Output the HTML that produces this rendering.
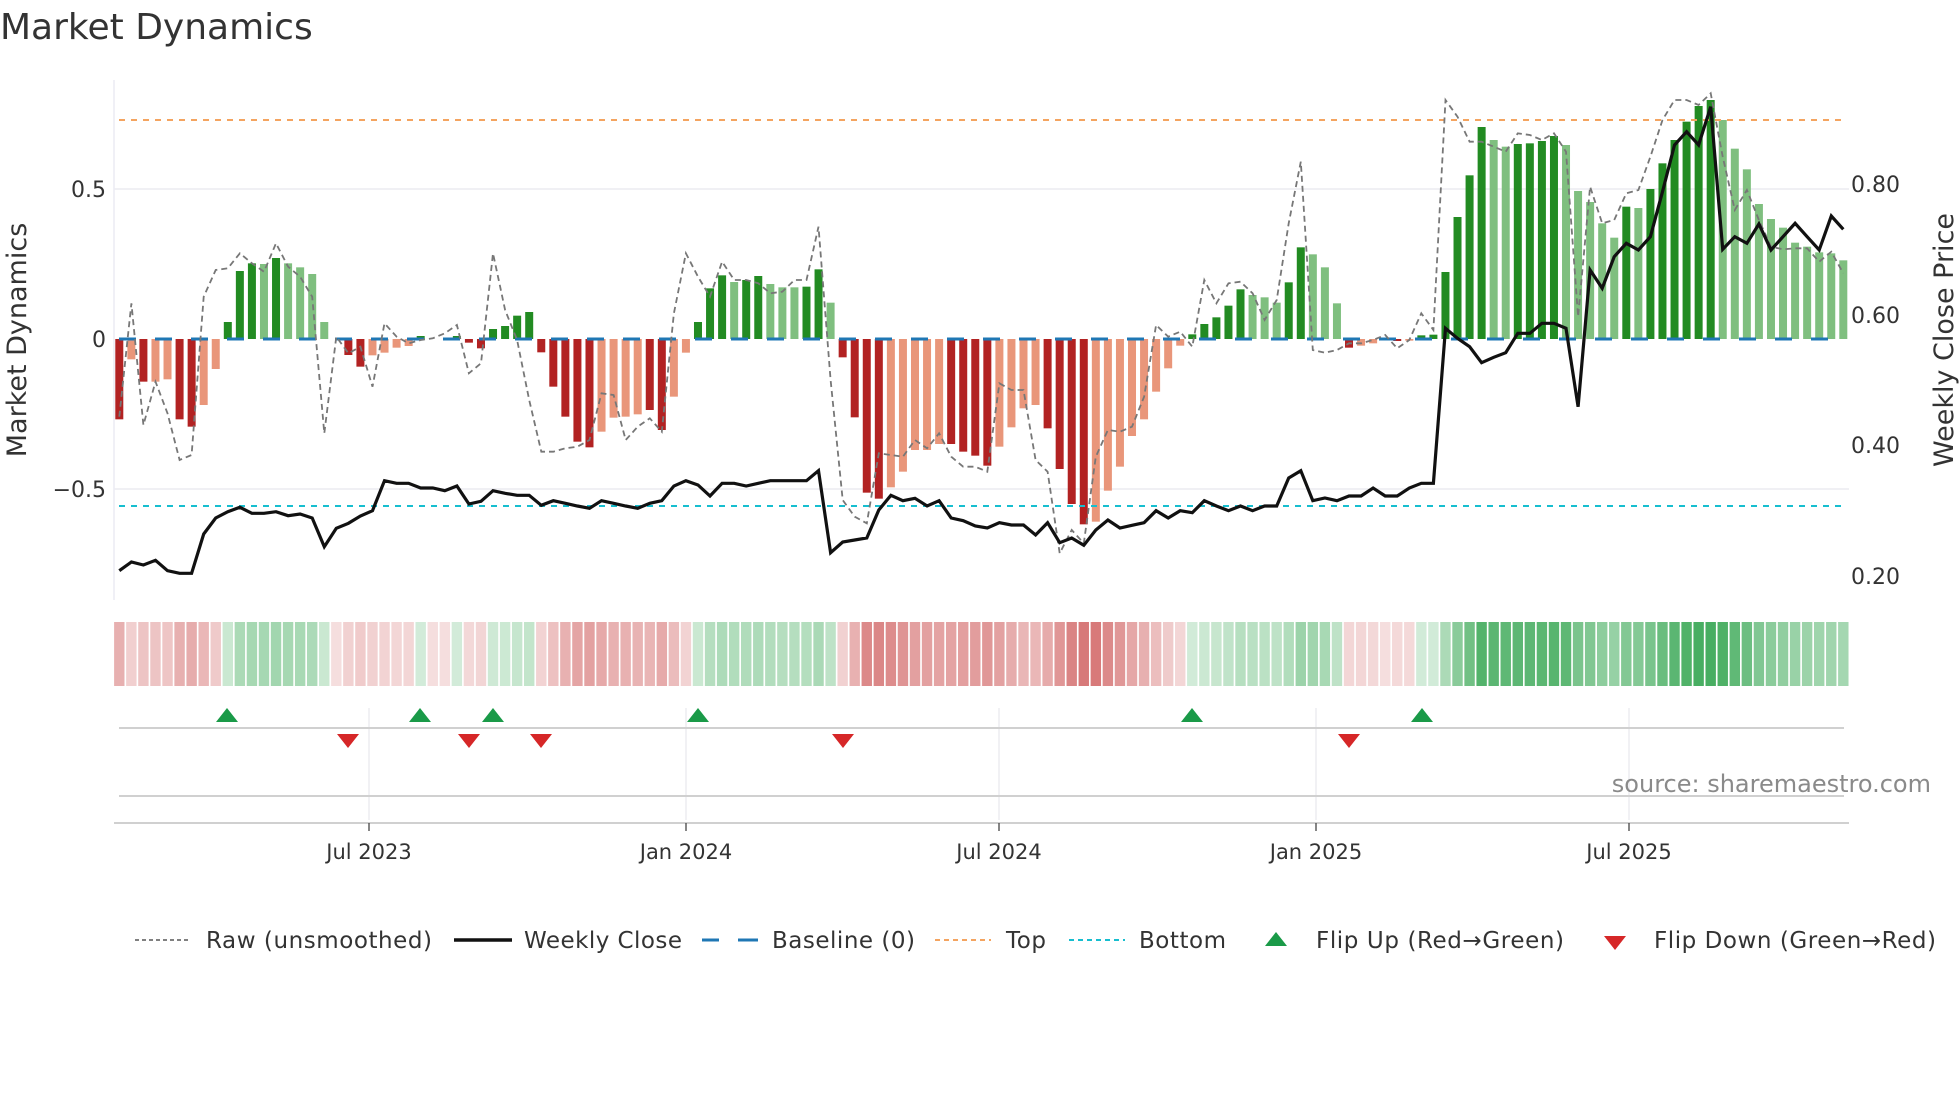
<!DOCTYPE html>
<html><head><meta charset="utf-8"><style>
html,body{margin:0;padding:0;background:#fff;}
svg{display:block;font-family:"DejaVu Sans","Liberation Sans",sans-serif;}
</style></head><body>
<svg id="s" width="1960" height="1102" viewBox="0 0 1960 1102" xmlns="http://www.w3.org/2000/svg">
<rect width="1960" height="1102" fill="#fff"/>
<text x="0" y="39" font-size="36" fill="#333">Market Dynamics</text>
<g stroke="#ececf0" stroke-width="1.5">
<line x1="114" y1="189" x2="1849" y2="189"/>
<line x1="114" y1="489" x2="1849" y2="489"/>
<line x1="369" y1="708" x2="369" y2="820"/>
<line x1="686" y1="708" x2="686" y2="820"/>
<line x1="999" y1="708" x2="999" y2="820"/>
<line x1="1316" y1="708" x2="1316" y2="820"/>
<line x1="1629" y1="708" x2="1629" y2="820"/>
</g>
<line x1="114" y1="80" x2="114" y2="600" stroke="#ececf4" stroke-width="1.5"/>
<g id="bars"></g>
<g id="heat"></g>
<line x1="119" y1="339" x2="1846" y2="339" stroke="#1f77b4" stroke-width="3" stroke-dasharray="17 19"/>
<line x1="119" y1="120" x2="1846" y2="120" stroke="#f4a460" stroke-width="2" stroke-dasharray="6 6"/>
<line x1="119" y1="506" x2="1846" y2="506" stroke="#17becf" stroke-width="2" stroke-dasharray="6 6"/>
<path id="raw" fill="none" stroke="#777" stroke-width="1.8" stroke-dasharray="6 4"/>
<path id="price" fill="none" stroke="#111" stroke-width="3.2" stroke-linejoin="miter"/>
<g font-size="22" fill="#333">
<text x="106" y="197" text-anchor="end">0.5</text>
<text x="106" y="347" text-anchor="end">0</text>
<text x="106" y="497" text-anchor="end">−0.5</text>
<text x="1851" y="192">0.80</text>
<text x="1851" y="323">0.60</text>
<text x="1851" y="453">0.40</text>
<text x="1851" y="584">0.20</text>
</g>
<text transform="translate(26,340) rotate(-90)" text-anchor="middle" font-size="27" fill="#333">Market Dynamics</text>
<text transform="translate(1953,340) rotate(-90)" text-anchor="middle" font-size="27" fill="#333">Weekly Close Price</text>
<line x1="119" y1="728" x2="1844" y2="728" stroke="#d0d0d0" stroke-width="2"/>
<line x1="119" y1="796" x2="1844" y2="796" stroke="#d0d0d0" stroke-width="2"/>
<line x1="114" y1="823" x2="1849" y2="823" stroke="#d0d0d0" stroke-width="2"/>
<g id="flips"></g>
<g stroke="#444" stroke-width="1.3">
<line x1="369" y1="823" x2="369" y2="831"/><line x1="686" y1="823" x2="686" y2="831"/>
<line x1="999" y1="823" x2="999" y2="831"/><line x1="1316" y1="823" x2="1316" y2="831"/>
<line x1="1629" y1="823" x2="1629" y2="831"/>
</g>
<g font-size="21" fill="#333" text-anchor="middle">
<text x="369" y="859">Jul 2023</text>
<text x="686" y="859">Jan 2024</text>
<text x="999" y="859">Jul 2024</text>
<text x="1316" y="859">Jan 2025</text>
<text x="1629" y="859">Jul 2025</text>
</g>
<text x="1931" y="792" text-anchor="end" font-size="24" fill="#8a8a8a">source: sharemaestro.com</text>
<g font-size="23" fill="#333">
<line x1="135" y1="940" x2="191" y2="940" stroke="#808080" stroke-width="2" stroke-dasharray="4 3"/>
<text x="206" y="948" textLength="226">Raw (unsmoothed)</text>
<line x1="454" y1="940" x2="512" y2="940" stroke="#111" stroke-width="3.5"/>
<text x="524" y="948" textLength="158">Weekly Close</text>
<line x1="702" y1="940" x2="758" y2="940" stroke="#1f77b4" stroke-width="3" stroke-dasharray="17 19"/>
<line x1="745" y1="940" x2="758" y2="940" stroke="#1f77b4" stroke-width="3"/>
<text x="772" y="948" textLength="143">Baseline (0)</text>
<line x1="935" y1="940" x2="991" y2="940" stroke="#f4a460" stroke-width="2" stroke-dasharray="5 4"/>
<text x="1006" y="948" textLength="40">Top</text>
<line x1="1069" y1="940" x2="1125" y2="940" stroke="#17becf" stroke-width="2" stroke-dasharray="5 4"/>
<text x="1139" y="948" textLength="87">Bottom</text>
<polygon points="1276,932 1265,946 1287,946" fill="#1a9a48"/>
<text x="1316" y="948" textLength="248">Flip Up (Red→Green)</text>
<polygon points="1604,936 1626,936 1615,950" fill="#d62728"/>
<text x="1654" y="948" textLength="282">Flip Down (Green→Red)</text>
</g>
</svg>
<script>
var bars="1018D,838L,905D,905L,898L,1018D,1040D,975L,867L,726G,573G,550G,552g,534G,550g,562g,582g,726g,777-,825D,860D,826L,818L,803L,798L,768G,777-,777-,768G,788D,805D,747G,738G,707G,696G,817D,920D,1010D,1085D,1102D,1055L,1013L,1010L,1003L,990D,1050D,950L,818L,726G,625G,586G,606g,600G,588G,612g,622g,622g,620G,568G,668g,832D,1012D,1238D,1256D,1222L,1175L,1110L,1110L,1092L,1092D,1115D,1127D,1157D,1100L,1042L,985L,975L,1045D,1167D,1272D,1333D,1325L,1232L,1160L,1068L,1018L,935L,865L,797L,763G,732G,712G,677G,628G,645g,652g,668g,607G,502G,523g,562g,670g,803D,797L,790L,777-,783D,782L,766G,764G,576G,411G,286G,141G,180g,200g,192G,190G,183G,168G,195g,333g,366g,430g,473g,380G,384g,327G,250G,180G,125G,78G,60G,120g,206g,268g,372g,417g,443g,488g,500g,517g,520g,541g".split(",");
var raw=[1010,670,1035,905,1000,1140,1125,650,570,565,520,550,575,490,560,590,650,1060,770,820,800,920,730,770,790,780,775,760,735,880,850,520,690,780,960,1115,1115,1105,1100,1080,940,945,1080,1040,1015,1055,700,520,590,650,545,600,600,610,640,635,600,600,440,900,1260,1310,1330,1120,1125,1130,1080,1105,1060,1130,1160,1160,1175,910,930,930,1140,1175,1420,1350,1390,1130,1050,1055,1040,950,735,770,755,800,600,670,610,605,640,720,660,430,245,810,818,810,790,790,780,765,805,780,700,750,60,110,185,185,200,215,160,165,180,160,215,710,320,430,420,340,330,230,120,60,60,75,40,230,390,330,420,500,508,505,505,545,515,580];
var pr=[1472,1446,1455,1441,1472,1480,1480,1362,1314,1295,1282,1300,1300,1295,1307,1302,1314,1400,1345,1330,1308,1292,1202,1210,1210,1224,1224,1232,1218,1272,1264,1232,1240,1246,1246,1276,1262,1270,1278,1285,1262,1270,1278,1285,1270,1262,1218,1202,1215,1248,1210,1210,1218,1210,1202,1202,1202,1202,1172,1418,1386,1380,1374,1290,1246,1262,1255,1278,1262,1314,1322,1338,1344,1328,1335,1335,1365,1328,1388,1374,1396,1350,1320,1344,1336,1328,1292,1314,1292,1298,1262,1278,1292,1278,1292,1278,1278,1194,1172,1262,1254,1262,1248,1248,1224,1248,1248,1224,1210,1210,745,775,800,848,832,818,760,760,730,730,745,980,570,625,530,490,510,470,335,195,155,195,80,508,470,490,432,510,470,430,470,510,408,448];
var NS="http://www.w3.org/2000/svg";
function el(t,a,p){var e=document.createElementNS(NS,t);for(var k in a)e.setAttribute(k,a[k]);p.appendChild(e);return e;}
var gb=document.getElementById("bars"),gh=document.getElementById("heat");
var col={D:"#b22222",L:"#e9967a",G:"#228b22",g:"#7fbf7f"};
function X(i){return 119.3+12.056*i;}
for(var i=0;i<bars.length;i++){
 var t=bars[i].slice(-1),py=parseFloat(bars[i]);var y=80+py/3;var v=(777-py)/900;
 if(t!="-"&&Math.abs(y-339)>0.3){el("rect",{x:X(i)-4,y:Math.min(y,339),width:8,height:Math.abs(y-339),fill:col[t]},gb);}
 var a=0.2+0.85*Math.abs(v);if(a>0.85)a=0.85;
 var c=(t=="G"||t=="g")?"rgba(40,160,70,"+a+")":"rgba(200,70,70,"+a+")";
 if(t=="-")c="rgba(200,70,70,0.18)";
 el("rect",{x:X(i)-5.2,y:622,width:10.4,height:64,fill:c},gh);
}
var d="",d2="";
for(var i=0;i<raw.length;i++){d+=(i?"L":"M")+X(i).toFixed(1)+" "+(80+raw[i]/3).toFixed(1);}
for(var i=0;i<pr.length;i++){d2+=(i?"L":"M")+X(i).toFixed(1)+" "+(80+pr[i]/3).toFixed(1);}
document.getElementById("raw").setAttribute("d",d);
document.getElementById("price").setAttribute("d",d2);
var gf=document.getElementById("flips");
[227,420,493,698,1192,1422].forEach(function(x){el("polygon",{points:(x)+",708 "+(x-11)+",722 "+(x+11)+",722",fill:"#1a9a48"},gf);});
[348,469,541,843,1349].forEach(function(x){el("polygon",{points:(x-11)+",734 "+(x+11)+",734 "+x+",748",fill:"#d62728"},gf);});
</script>
</body></html>
